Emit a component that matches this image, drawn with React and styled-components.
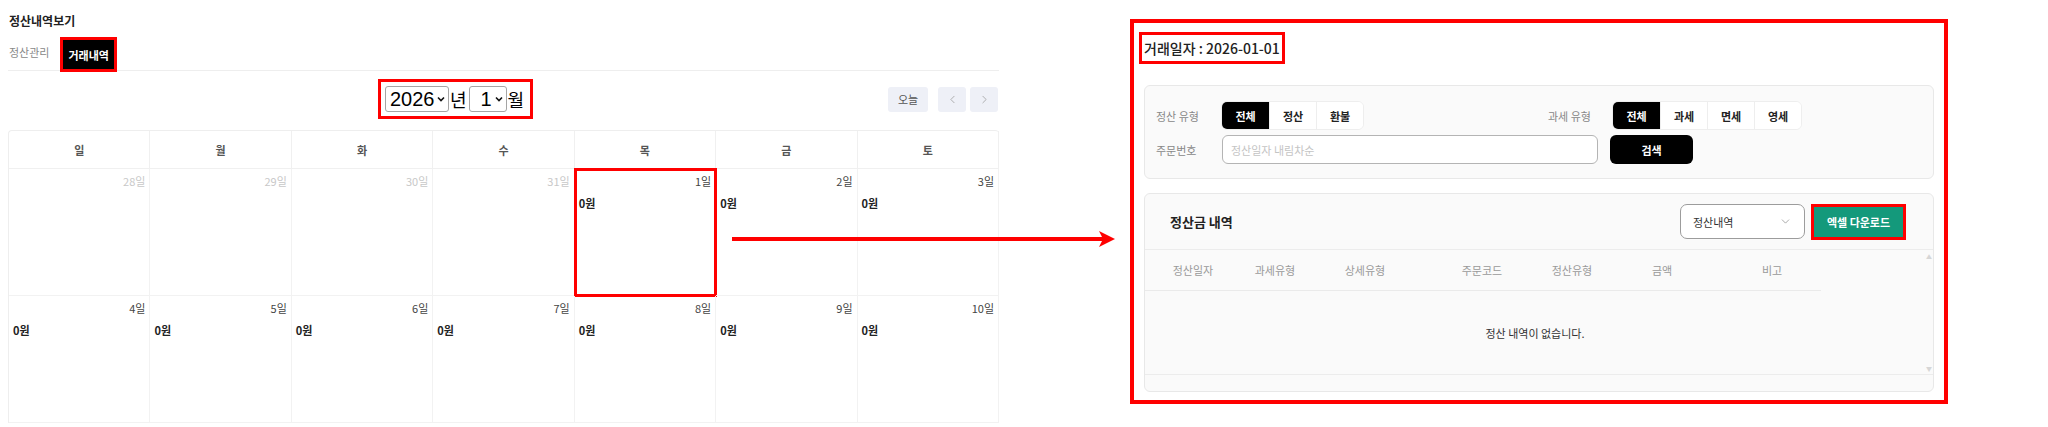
import React from 'react';
import styled, { createGlobalStyle } from 'styled-components';
import { ChevronLeft, ChevronRight, ChevronDown } from 'lucide-react';

const GlobalStyle = createGlobalStyle`
    * { box-sizing : border-box; }
    body {
        margin : 0;
        background : #fff;
        font-family : "Noto Sans CJK KR", "Noto Sans", sans-serif;
        color : #222;
    }
`;

const RED = '#f00';

const Page = styled.div`
    position : relative;
    display : flex;
    align-items : flex-start;
    padding-left : 8px;
    width : 2048px;
    height : 427px;
    overflow : hidden;
`;

/* 왼쪽 : 달력 */
const LeftPanel = styled.div`
    width : 991px;
    padding-top : 13px;
    flex-shrink : 0;
`;

const PageTitle = styled.h1`
    margin : 0 0 0 1px;
    font-size : 12px;
    line-height : 16px;
    font-weight : 700;
    color : #222;
`;

const Tabs = styled.div`
    margin-top : 11px;
    height : 31px;
    display : flex;
    align-items : flex-start;
    border-bottom : 1px solid #eee;
`;

const Tab = styled.div`
    height : 29px;
    display : flex;
    align-items : center;
    font-size : 11px;
    ${({ $active }) => $active ? `
        margin-left : 14px;
        padding : 0 5px;
        background : #000;
        color : #fff;
        font-weight : 700;
        outline : 3px solid ${RED};
    ` : `
        margin-left : 1px;
        padding-bottom : 6px;
        color : #888;
    `}
`;

const Controls = styled.div`
    margin-top : 15px;
    height : 26px;
    display : flex;
    align-items : center;
`;

const MonthPicker = styled.div`
    margin-left : 377px;
    display : flex;
    align-items : center;
    outline : 3px solid ${RED};
    outline-offset : 4px;
    line-height : 26px;
    color : #000;
`;

const SelectBox = styled.label`
    width : ${({ $w }) => $w}px;
    height : 26px;
    padding : 0 3px 0 4px;
    display : flex;
    align-items : center;
    justify-content : flex-end;
    background : #fff;
    border : 1px solid #a5a5a5;
    border-radius : 3px;
`;

const Select = styled.select`
    appearance : none;
    -webkit-appearance : none;
    padding : 0;
    margin : 0 2px 0 0;
    border : none;
    background : transparent;
    font-size : 20px;
    font-family : "Liberation Sans", sans-serif;
    color : #000;
    outline : none;
`;

const Caret = styled.svg`
    flex-shrink : 0;
`;

const Unit = styled.span`
    margin : 0 2px 0 1px;
    font-family : "Noto Sans CJK KR", sans-serif;
    font-size : 18px;
`;

const NavGroup = styled.div`
    margin-left : auto;
    margin-right : 1px;
    display : flex;
    gap : 4px;
`;

const NavButton = styled.button`
    width : ${({ $w }) => $w || 28}px;
    height : 25px;
    margin-right : ${({ $mr }) => $mr || 0}px;
    padding : 0;
    display : flex;
    align-items : center;
    justify-content : center;
    border : none;
    border-radius : 3px;
    background : #eef0f7;
    color : #555;
    font-size : 11px;
    font-family : inherit;
`;

const Calendar = styled.div`
    margin-top : 18px;
    display : grid;
    grid-template-columns : repeat(7, 1fr);
    border-top : 1px solid #eee;
    border-left : 1px solid #eee;
    border-radius : 4px 4px 0 0;
`;

const HeadCell = styled.div`
    height : 38px;
    display : flex;
    align-items : center;
    justify-content : center;
    font-size : 11px;
    font-weight : 700;
    color : #555;
    border-right : 1px solid #f0f0f0;
    border-bottom : 1px solid #f0f0f0;
`;

const DayCell = styled.div`
    height : 127px;
    padding : 5px 4px;
    border-right : 1px solid #f2f2f2;
    border-bottom : 1px solid #f2f2f2;
    ${({ $selected }) => $selected && `
        outline : 3px solid ${RED};
        outline-offset : -2px;
    `}
`;

const DayNum = styled.div`
    text-align : right;
    font-size : 11px;
    line-height : 14px;
    color : ${({ $muted }) => $muted ? '#c8c8c8' : '#444'};
`;

const Amount = styled.div`
    margin-top : 8px;
    font-size : 11px;
    line-height : 14px;
    font-weight : 700;
    color : #222;
`;

/* 화살표 주석 */
const Arrow = styled.svg`
    position : absolute;
    left : 730px;
    top : 230px;
`;

/* 오른쪽 : 상세 */
const RightPanel = styled.div`
    margin : 19px 0 0 131px;
    width : 818px;
    height : 385px;
    flex-shrink : 0;
    border : 4px solid ${RED};
    padding : 12px 10px 10px;
`;

const DateTitle = styled.div`
    display : inline-block;
    height : 22px;
    line-height : 22px;
    font-size : 14px;
    font-weight : 500;
    color : #222;
    outline : 3px solid ${RED};
    outline-offset : 2px;
`;

const Card = styled.div`
    background : #fafafa;
    border : 1px solid #e8e8e8;
    border-radius : 6px;
`;

const FilterCard = styled(Card)`
    margin-top : 26px;
    padding : 15px 11px 14px;
    display : flex;
    flex-direction : column;
    gap : 5px;
`;

const FilterRow = styled.div`
    display : flex;
    align-items : center;
`;

const Field = styled.div`
    width : ${({ $w }) => $w ? `${$w}px` : 'auto'};
    display : flex;
    align-items : center;
`;

const Label = styled.span`
    width : ${({ $w }) => $w || 65}px;
    flex-shrink : 0;
    font-size : 11px;
    color : #888;
`;

const Segment = styled.div`
    display : flex;
    height : 29px;
    background : #fff;
    border : 1px solid #eee;
    border-radius : 6px;
    overflow : hidden;
`;

const SegButton = styled.button`
    width : 47px;
    padding : 0;
    border : none;
    border-left : 1px solid #eee;
    font-family : inherit;
    font-size : 11px;
    font-weight : 700;
    background : ${({ $active }) => $active ? '#000' : '#fff'};
    color : ${({ $active }) => $active ? '#fff' : '#222'};
    &:first-child { border-left : none; }
`;

const SearchInput = styled.input`
    width : 376px;
    height : 29px;
    padding : 0 8px;
    border : 1px solid #b4b4b4;
    border-radius : 6px;
    background : #fff;
    font-family : inherit;
    font-size : 11px;
    &::placeholder { color : #c4c4c4; }
`;

const BlackButton = styled.button`
    margin-left : 12px;
    width : 83px;
    height : 29px;
    border : none;
    border-radius : 6px;
    background : #000;
    color : #fff;
    font-family : inherit;
    font-size : 11px;
    font-weight : 700;
`;

const ResultCard = styled(Card)`
    margin-top : 14px;
    padding-bottom : 16px;
`;

const ResultHeader = styled.div`
    height : 56px;
    padding : 0 30px 0 25px;
    display : flex;
    align-items : center;
    border-bottom : 1px solid #ececec;
`;

const ResultTitle = styled.h2`
    margin : 0;
    font-size : 13px;
    font-weight : 700;
    color : #222;
`;

const Dropdown = styled.div`
    margin-left : auto;
    width : 125px;
    height : 35px;
    padding : 0 12px;
    display : flex;
    align-items : center;
    justify-content : space-between;
    background : #fff;
    border : 1px solid #9c9c9c;
    border-radius : 7px;
    font-size : 11px;
    color : #333;
`;

const ExcelButton = styled.button`
    margin-left : 9px;
    width : 89px;
    height : 30px;
    border : none;
    background : #14997b;
    color : #fff;
    font-family : inherit;
    font-size : 11px;
    font-weight : 700;
    outline : 3px solid ${RED};
`;

const ResultBody = styled.div`
    height : 125px;
    display : flex;
    border-bottom : 1px solid #ececec;
`;

const TableArea = styled.div`
    flex : 1;
`;

const TableHead = styled.div`
    width : 676px;
    height : 41px;
    display : grid;
    grid-template-columns : 96px 68px 112px 122px 58px 122px 98px;
    align-items : center;
    border-bottom : 1px solid #eaeaea;
`;

const Th = styled.div`
    text-align : center;
    font-size : 11px;
    color : #999;
`;

const Empty = styled.div`
    height : 83px;
    display : flex;
    align-items : center;
    justify-content : center;
    font-size : 11px;
    color : #333;
`;

const ScrollRail = styled.div`
    width : 8px;
    padding : 4px 0 2px;
    display : flex;
    flex-direction : column;
    justify-content : space-between;
    align-items : center;
    font-size : 6px;
    line-height : 6px;
    color : #d6d6d6;
`;

const weeks = [
    [[28, true], [29, true], [30, true], [31, true], [1], [2], [3]],
    [[4], [5], [6], [7], [8], [9], [10]],
];

const CaretIcon = () => (
    <Caret width="8" height="6" viewBox="0 0 8 6">
        <polyline points="1,1.5 4,4.5 7,1.5" fill="none" stroke="#111" strokeWidth="1.6" />
    </Caret>
);

const App = () => {
    return (
        <>
            <GlobalStyle />
            <Page>
                <LeftPanel>
                    <PageTitle>정산내역보기</PageTitle>
                    <Tabs>
                        <Tab>정산관리</Tab>
                        <Tab $active>거래내역</Tab>
                    </Tabs>
                    <Controls>
                        <MonthPicker>
                            <SelectBox $w={64}>
                                <Select defaultValue="2026">
                                    <option>2026</option>
                                </Select>
                                <CaretIcon />
                            </SelectBox>
                            <Unit>년</Unit>
                            <SelectBox $w={38}>
                                <Select defaultValue="1">
                                    <option>1</option>
                                </Select>
                                <CaretIcon />
                            </SelectBox>
                            <Unit>월</Unit>
                        </MonthPicker>
                        <NavGroup>
                            <NavButton $w={40} $mr={6}>오늘</NavButton>
                            <NavButton><ChevronLeft size={13} strokeWidth={1.4} color="#999" /></NavButton>
                            <NavButton><ChevronRight size={13} strokeWidth={1.4} color="#999" /></NavButton>
                        </NavGroup>
                    </Controls>
                    <Calendar>
                        {['일', '월', '화', '수', '목', '금', '토'].map(d => (
                            <HeadCell key={d}>{d}</HeadCell>
                        ))}
                        {weeks.flat().map(([d, muted]) => (
                            <DayCell key={`${d}-${muted}`} $selected={d === 1 && !muted}>
                                <DayNum $muted={muted}>{d}일</DayNum>
                                {!muted && <Amount>0원</Amount>}
                            </DayCell>
                        ))}
                    </Calendar>
                </LeftPanel>

                <Arrow width="386" height="18" viewBox="0 0 386 18">
                    <line x1="2" y1="9" x2="376" y2="9" stroke={RED} strokeWidth="4" />
                    <polygon points="369,1 385,9 369,17 373,9" fill={RED} />
                </Arrow>

                <RightPanel>
                    <DateTitle>거래일자 : 2026-01-01</DateTitle>
                    <FilterCard>
                        <FilterRow>
                            <Field $w={392}>
                                <Label>정산 유형</Label>
                                <Segment>
                                    <SegButton $active>전체</SegButton>
                                    <SegButton>정산</SegButton>
                                    <SegButton>환불</SegButton>
                                </Segment>
                            </Field>
                            <Field>
                                <Label $w={64}>과세 유형</Label>
                                <Segment>
                                    <SegButton $active>전체</SegButton>
                                    <SegButton>과세</SegButton>
                                    <SegButton>면세</SegButton>
                                    <SegButton>영세</SegButton>
                                </Segment>
                            </Field>
                        </FilterRow>
                        <FilterRow>
                            <Label $w={66}>주문번호</Label>
                            <SearchInput placeholder="정산일자 내림차순" />
                            <BlackButton>검색</BlackButton>
                        </FilterRow>
                    </FilterCard>
                    <ResultCard>
                        <ResultHeader>
                            <ResultTitle>정산금 내역</ResultTitle>
                            <Dropdown>
                                정산내역
                                <ChevronDown size={13} strokeWidth={1.3} color="#888" />
                            </Dropdown>
                            <ExcelButton>엑셀 다운로드</ExcelButton>
                        </ResultHeader>
                        <ResultBody>
                            <TableArea>
                                <TableHead>
                                    {['정산일자', '과세유형', '상세유형', '주문코드', '정산유형', '금액', '비고'].map(h => (
                                        <Th key={h}>{h}</Th>
                                    ))}
                                </TableHead>
                                <Empty>정산 내역이 없습니다.</Empty>
                            </TableArea>
                            <ScrollRail>
                                <span>▲</span>
                                <span>▼</span>
                            </ScrollRail>
                        </ResultBody>
                    </ResultCard>
                </RightPanel>
            </Page>
        </>
    );
};

export default App;
